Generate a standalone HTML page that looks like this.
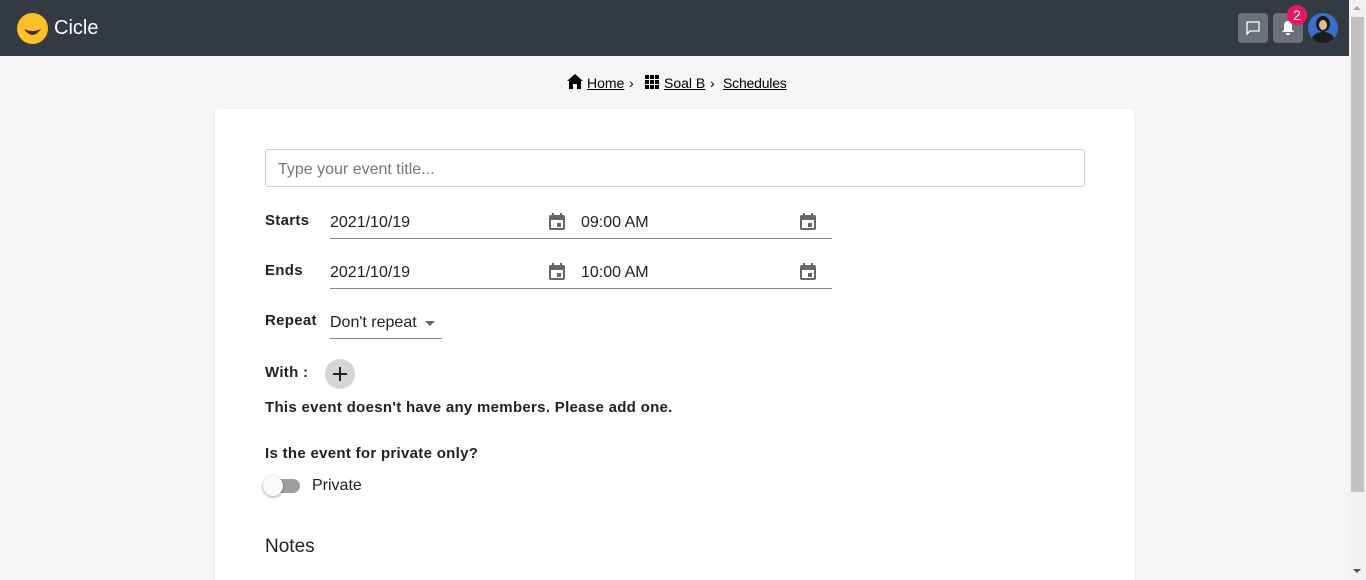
<!DOCTYPE html>
<html><head><style>
*{box-sizing:border-box;margin:0;padding:0}
html,body{width:1366px;height:580px;overflow:hidden}
body{background:#f5f5f5;font-family:"Liberation Sans",sans-serif;position:relative}
.nav{position:absolute;left:0;top:0;width:1349px;height:56px;background:#343a42}
.sb{position:absolute;right:0;top:0;width:17px;height:580px;background:#f1f1f1}
.sb .th{position:absolute;left:2px;top:17px;width:13px;height:475px;background:#c1c1c1}
.card{position:absolute;left:215px;top:109px;width:920px;height:480px;background:#fff;border-radius:6px;box-shadow:0 1px 3px rgba(0,0,0,.08)}
.abs{position:absolute}
.lbl{position:absolute;left:265px;font-weight:bold;font-size:15px;letter-spacing:0.3px;color:#222}
.fld{position:absolute;font-size:16px;color:#222}
.line{position:absolute;height:1px;background:#8a8a8a}
.bc{position:absolute;top:75px;font-size:14px;color:#000;text-decoration:underline}
</style></head><body>
<div class="nav">
 <svg class="abs" style="left:17px;top:13px" width="31" height="31" viewBox="0 0 31 31"><circle cx="15.5" cy="15.5" r="15.5" fill="#fbbf2a"/><path d="M7 16 Q15.5 28 24 16 Q15.5 20 7 16Z" fill="#333"/></svg>
 <div class="abs" style="left:54px;top:17px;color:#fff;font-size:20px">Cicle</div>
 <div class="abs" style="left:1238px;top:13px;width:30px;height:30px;background:#6c7077;border-radius:4px"></div>
 <svg class="abs" style="left:1245px;top:20px" width="16" height="16" viewBox="0 0 16 16"><path d="M2 2h12v9H5l-3 3z" fill="none" stroke="#fff" stroke-width="1.3"/></svg>
 <div class="abs" style="left:1273px;top:13px;width:30px;height:30px;background:#6c7077;border-radius:4px"></div>
 <svg class="abs" style="left:1281px;top:20px" width="14" height="16" viewBox="0 0 14 16"><path d="M7 1C4 1 3 4 3 6v4L1 12h12l-2-2V6c0-2-1-5-4-5zM5 13a2 2 0 004 0z" fill="#fff"/></svg>
 <div class="abs" style="left:1287px;top:5px;width:20px;height:20px;background:#e8175d;border-radius:50%;color:#fff;font-size:14px;text-align:center;line-height:20px">2</div>
 <div class="abs" style="left:1308px;top:13px;width:30px;height:30px;border-radius:50%;background:#3a6fd0;overflow:hidden"><div class="abs" style="left:8px;top:3px;width:14px;height:16px;border-radius:50%;background:#1a1a1a"></div><div class="abs" style="left:11px;top:7px;width:8px;height:10px;border-radius:50%;background:#e2b9a0"></div><div class="abs" style="left:4px;top:19px;width:22px;height:14px;border-radius:50% 50% 0 0;background:#1c1c1c"></div></div>
</div>
<div class="sb"><div class="abs" style="left:4px;top:6px;border-left:4px solid transparent;border-right:4px solid transparent;border-bottom:4px solid #a3a3a3"></div><div class="th"></div><div class="abs" style="left:4px;top:569px;border-left:4px solid transparent;border-right:4px solid transparent;border-top:4px solid #505050"></div></div>
<svg class="abs" style="left:567px;top:74px" width="16" height="15" viewBox="0 0 16 15"><path d="M8 0L0 7h2v8h4v-5h4v5h4V7h2z" fill="#000"/></svg>
<a class="bc" style="left:587px">Home</a>
<div class="abs" style="left:629px;top:75px;font-size:14px">›</div>
<svg class="abs" style="left:645px;top:75px" width="14" height="14" viewBox="0 0 14 14" fill="#000"><rect x="0" y="0" width="4" height="4"/><rect x="5" y="0" width="4" height="4"/><rect x="10" y="0" width="4" height="4"/><rect x="0" y="5" width="4" height="4"/><rect x="5" y="5" width="4" height="4"/><rect x="10" y="5" width="4" height="4"/><rect x="0" y="10" width="4" height="4"/><rect x="5" y="10" width="4" height="4"/><rect x="10" y="10" width="4" height="4"/></svg>
<a class="bc" style="left:664px">Soal B</a>
<div class="abs" style="left:710px;top:75px;font-size:14px">›</div>
<a class="bc" style="left:723px;letter-spacing:-0.2px">Schedules</a>
<div class="card"></div>
<div class="abs" style="left:265px;top:149px;width:820px;height:38px;border:1px solid #ccc;border-radius:3px;padding:11px 12px;font-size:16px;color:#777">Type your event title...</div>
<div class="lbl" style="top:212px">Starts</div>
<div class="fld" style="left:330px;top:214px">2021/10/19</div>
<div class="fld" style="left:581px;top:214px">09:00 AM</div>
<div class="line" style="left:330px;top:238px;width:502px"></div>
<div class="lbl" style="top:262px">Ends</div>
<div class="fld" style="left:330px;top:264px">2021/10/19</div>
<div class="fld" style="left:581px;top:264px">10:00 AM</div>
<div class="line" style="left:330px;top:288px;width:502px"></div>
<svg width="0" height="0" style="position:absolute"><defs><symbol id="cal" viewBox="0 0 20 20"><path d="M5 1v2H4a2 2 0 00-2 2v11a2 2 0 002 2h12a2 2 0 002-2V5a2 2 0 00-2-2h-1V1h-2v2H7V1zM4 8h12v8H4z M10 11h4v4h-4z" fill="#666"/></symbol></defs></svg>
<svg class="abs" style="left:547px;top:212px" width="20" height="20"><use href="#cal"/></svg>
<svg class="abs" style="left:798px;top:212px" width="20" height="20"><use href="#cal"/></svg>
<svg class="abs" style="left:547px;top:262px" width="20" height="20"><use href="#cal"/></svg>
<svg class="abs" style="left:798px;top:262px" width="20" height="20"><use href="#cal"/></svg>
<div class="lbl" style="top:312px">Repeat</div>
<div class="fld" style="left:330px;top:314px">Don't repeat</div>
<div class="abs" style="left:425px;top:321px;border-left:5px solid transparent;border-right:5px solid transparent;border-top:5px solid #666"></div>
<div class="line" style="left:330px;top:338px;width:112px"></div>
<div class="lbl" style="top:364px">With :</div>
<div class="abs" style="left:325px;top:359px;width:30px;height:30px;border-radius:50%;background:#d5d5d5"></div>
<svg class="abs" style="left:332px;top:366px" width="16" height="16"><path d="M8 1v14M1 8h14" stroke="#222" stroke-width="2"/></svg>
<div class="lbl" style="top:399px">This event doesn't have any members. Please add one.</div>
<div class="lbl" style="top:445px">Is the event for private only?</div>
<div class="abs" style="left:266px;top:479px;width:34px;height:14px;border-radius:7px;background:#9e9e9e"></div>
<div class="abs" style="left:263px;top:476px;width:20px;height:20px;border-radius:50%;background:#fafafa;box-shadow:0 1px 3px rgba(0,0,0,.4)"></div>
<div class="fld" style="left:312px;top:477px">Private</div>
<div class="abs" style="left:265px;top:536px;font-size:19px;color:#222">Notes</div>
</body></html>
